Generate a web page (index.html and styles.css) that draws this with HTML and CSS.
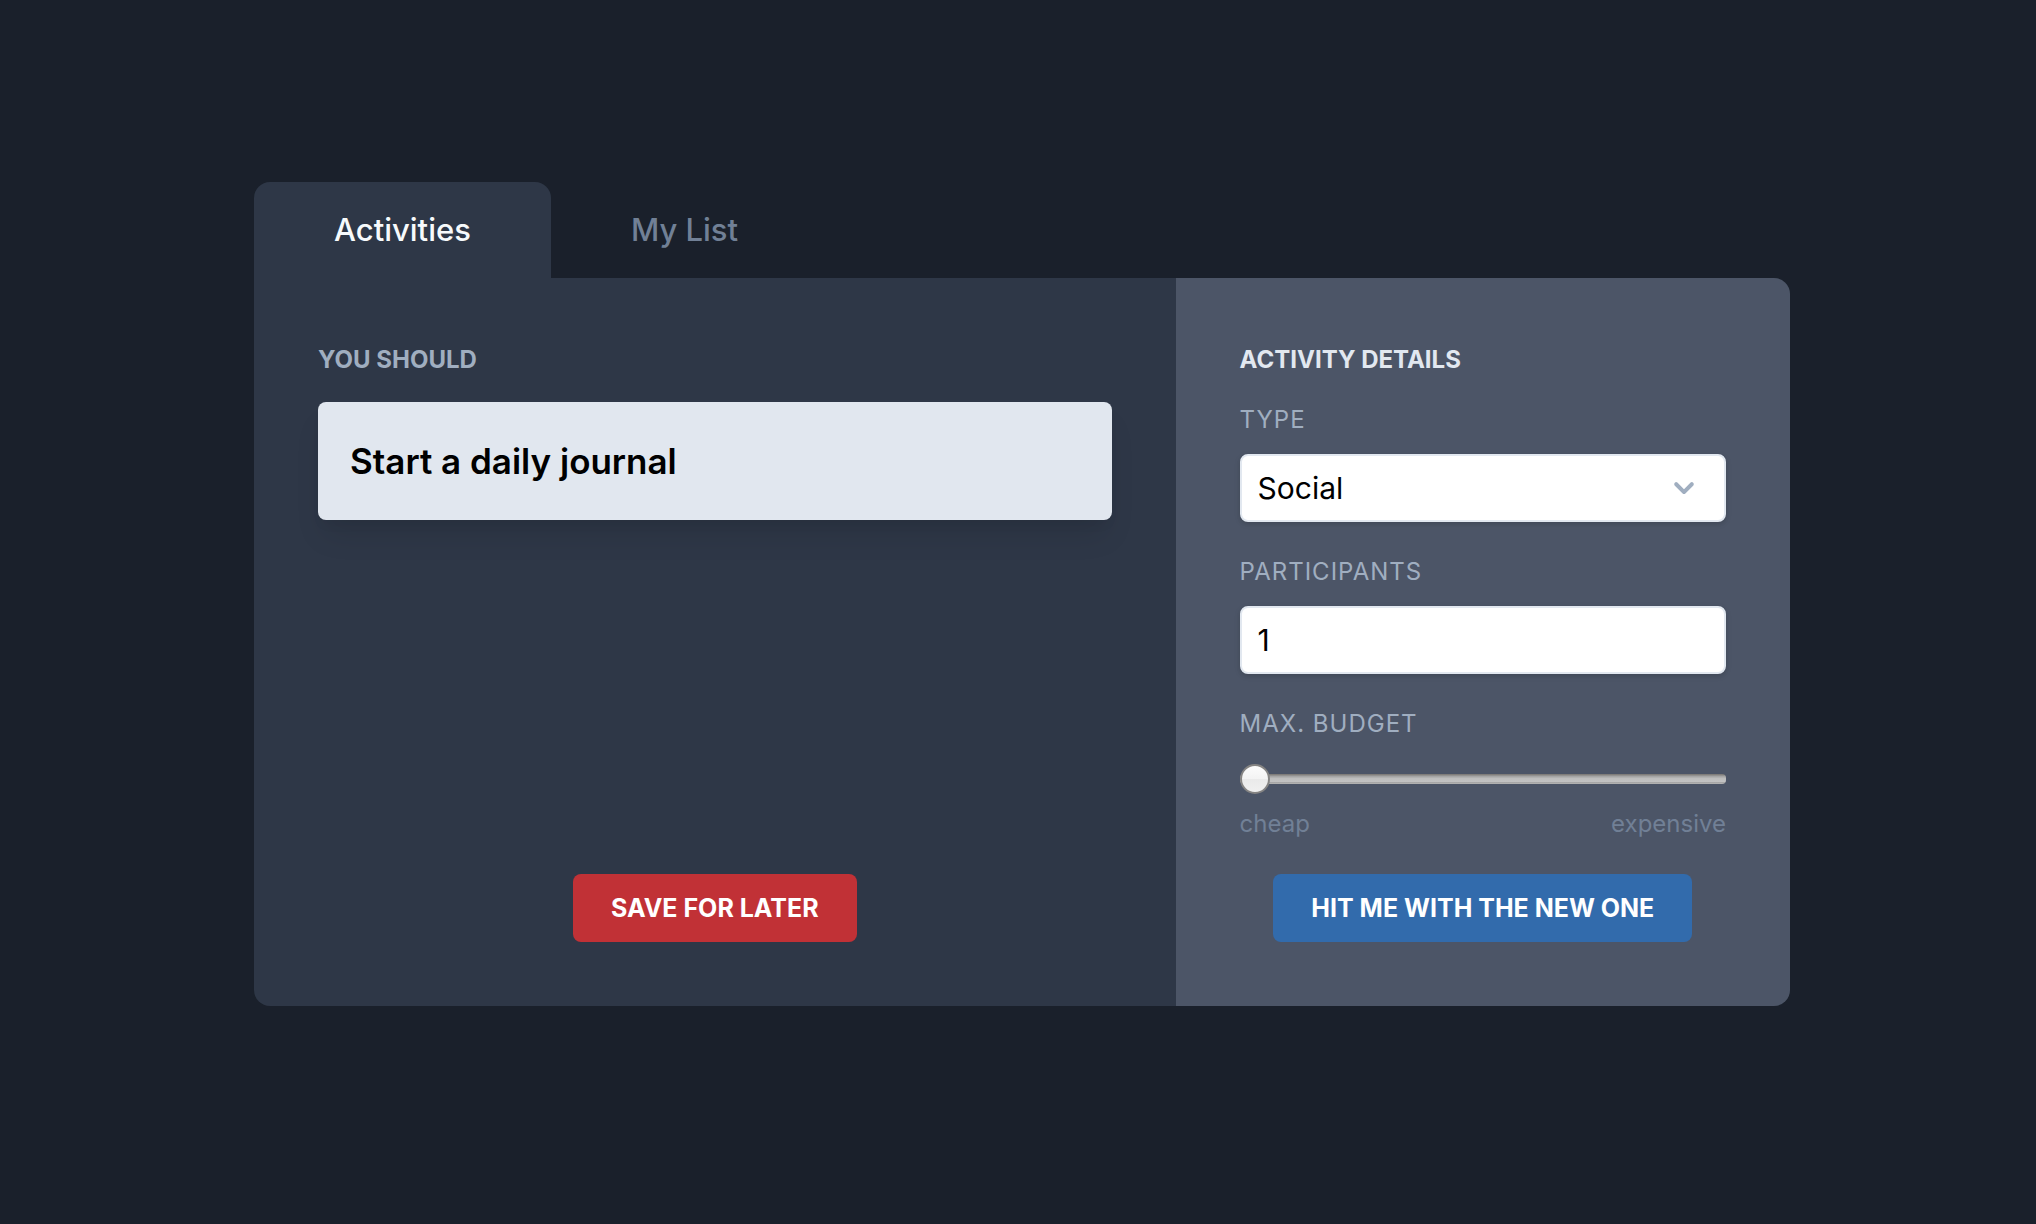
FILE: index.html
```html
<!DOCTYPE html>
<html lang="en">
<head>
  <meta charset="utf-8">
  <meta name="viewport" content="width=device-width, initial-scale=1">
  <title>Activities</title>
  <link rel="stylesheet" href="styles.css">
</head>
<body>
  <main class="app">
    <nav class="tabs">
      <a class="tab tab-active" href="#activities" aria-current="page">Activities</a>
      <a class="tab" href="#my-list">My List</a>
    </nav>
    <div class="panel">
      <section class="suggestion">
        <h2 class="heading">You should</h2>
        <p class="activity">Start a daily journal</p>
        <button class="button button-save" type="button">Save for later</button>
      </section>
      <form class="details">
        <h2 class="heading heading-light">Activity details</h2>
        <div class="field">
          <label class="label" for="type">Type</label>
          <div class="select-wrap">
            <select class="control" id="type">
              <option>Social</option>
            </select>
            <svg class="chevron" viewBox="0 0 24 24" aria-hidden="true"><path d="M15.3 9.3a1 1 0 0 1 1.4 1.4l-4 4a1 1 0 0 1-1.4 0l-4-4a1 1 0 0 1 1.4-1.4l3.3 3.29 3.3-3.29z"/></svg>
          </div>
        </div>
        <div class="field">
          <label class="label" for="participants">Participants</label>
          <input class="control" id="participants" type="text" inputmode="numeric" value="1">
        </div>
        <div class="field">
          <label class="label" for="budget">Max. budget</label>
          <input class="slider" id="budget" type="range" min="0" max="1" step="0.1" value="0">
          <div class="scale"><span>cheap</span><span>expensive</span></div>
        </div>
        <button class="button button-new" type="button">Hit me with the new one</button>
      </form>
    </div>
  </main>
</body>
</html>
```
FILE: styles.css
```css
*,
*::before,
*::after {
  box-sizing: border-box;
}

body {
  margin: 0;
  min-height: 100vh;
  padding: 182px 0 64px 8px;
  background: #1a202b;
  color: #000;
  font-family: Inter, "Liberation Sans", sans-serif;
  font-size: 32px;
  line-height: 48px;
}

.app {
  max-width: 1536px;
  margin: 0 auto;
}

.tabs {
  display: flex;
}

.tab {
  padding: 24px 80px;
  border-radius: 16px 16px 0 0;
  color: #718096;
  font-size: 31px;
  font-weight: 500;
  text-decoration: none;
}

.tab-active {
  background: #2e3747;
  color: #f7fafc;
}

.panel {
  display: grid;
  grid-template-columns: 3fr 2fr;
  border-radius: 0 16px 16px 16px;
  overflow: hidden;
}

.suggestion,
.details {
  display: flex;
  flex-direction: column;
  padding: 64px;
}

.suggestion {
  background: #2e3747;
}

.details {
  background: #4c5567;
}

.heading {
  margin: 0 0 24px;
  color: #a0aec0;
  font-size: 24px;
  font-weight: 700;
  line-height: 36px;
  text-transform: uppercase;
}

.heading-light {
  color: #e2e8f0;
}

.activity {
  margin: 0;
  padding: 32px;
  border-radius: 8px;
  background: #e1e7ef;
  box-shadow: 0 20px 30px -6px rgba(0, 0, 0, 0.1), 0 8px 12px -4px rgba(0, 0, 0, 0.05);
  font-size: 35px;
  font-weight: 600;
  line-height: 54px;
}

.field {
  margin-bottom: 32px;
}

.label {
  display: block;
  margin-bottom: 16px;
  color: #a0aec0;
  font-size: 24px;
  letter-spacing: 1px;
  line-height: 36px;
  text-transform: uppercase;
}

.control {
  display: block;
  width: 100%;
  height: 68px;
  padding: 8px 16px;
  appearance: none;
  border: 2px solid #e2e8f0;
  border-radius: 8px;
  background: #fff;
  box-shadow: 0 2px 6px rgba(0, 0, 0, 0.1), 0 2px 4px rgba(0, 0, 0, 0.06);
  color: #000;
  font: inherit;
  font-size: 30px;
}

.select-wrap {
  position: relative;
}

.chevron {
  position: absolute;
  top: 10px;
  right: 18px;
  width: 48px;
  height: 48px;
  fill: #a0aec0;
  pointer-events: none;
}

.slider {
  display: block;
  width: 100%;
  height: 42px;
  margin: 0 0 6px;
  appearance: none;
  background: transparent;
}

.slider::-webkit-slider-runnable-track {
  height: 10px;
  border-radius: 4px;
  background: linear-gradient(#767370, #a5a5a5 25%, #bdbdbd 45%, #c3c3c3 80%, #a3a3a3 80%, #b5b5b5);
}

.slider::-webkit-slider-thumb {
  width: 30px;
  height: 30px;
  margin-top: -10px;
  appearance: none;
  border: 2px solid #858483;
  border-radius: 50%;
  background: linear-gradient(#fcfcfc, #f3f3f3 50%, #eaeaea 50%, #f0f0f0);
}

.scale {
  display: flex;
  justify-content: space-between;
  color: #718096;
  font-size: 24px;
  line-height: 36px;
}

.button {
  align-self: center;
  height: 68px;
  margin-top: auto;
  padding: 0 38px;
  border: 0;
  border-radius: 8px;
  color: #fff;
  font: inherit;
  font-size: 25px;
  font-weight: 700;
  text-transform: uppercase;
  white-space: nowrap;
}

.button-save {
  background: #c13136;
}

.button-new {
  background: #326bac;
}
```
